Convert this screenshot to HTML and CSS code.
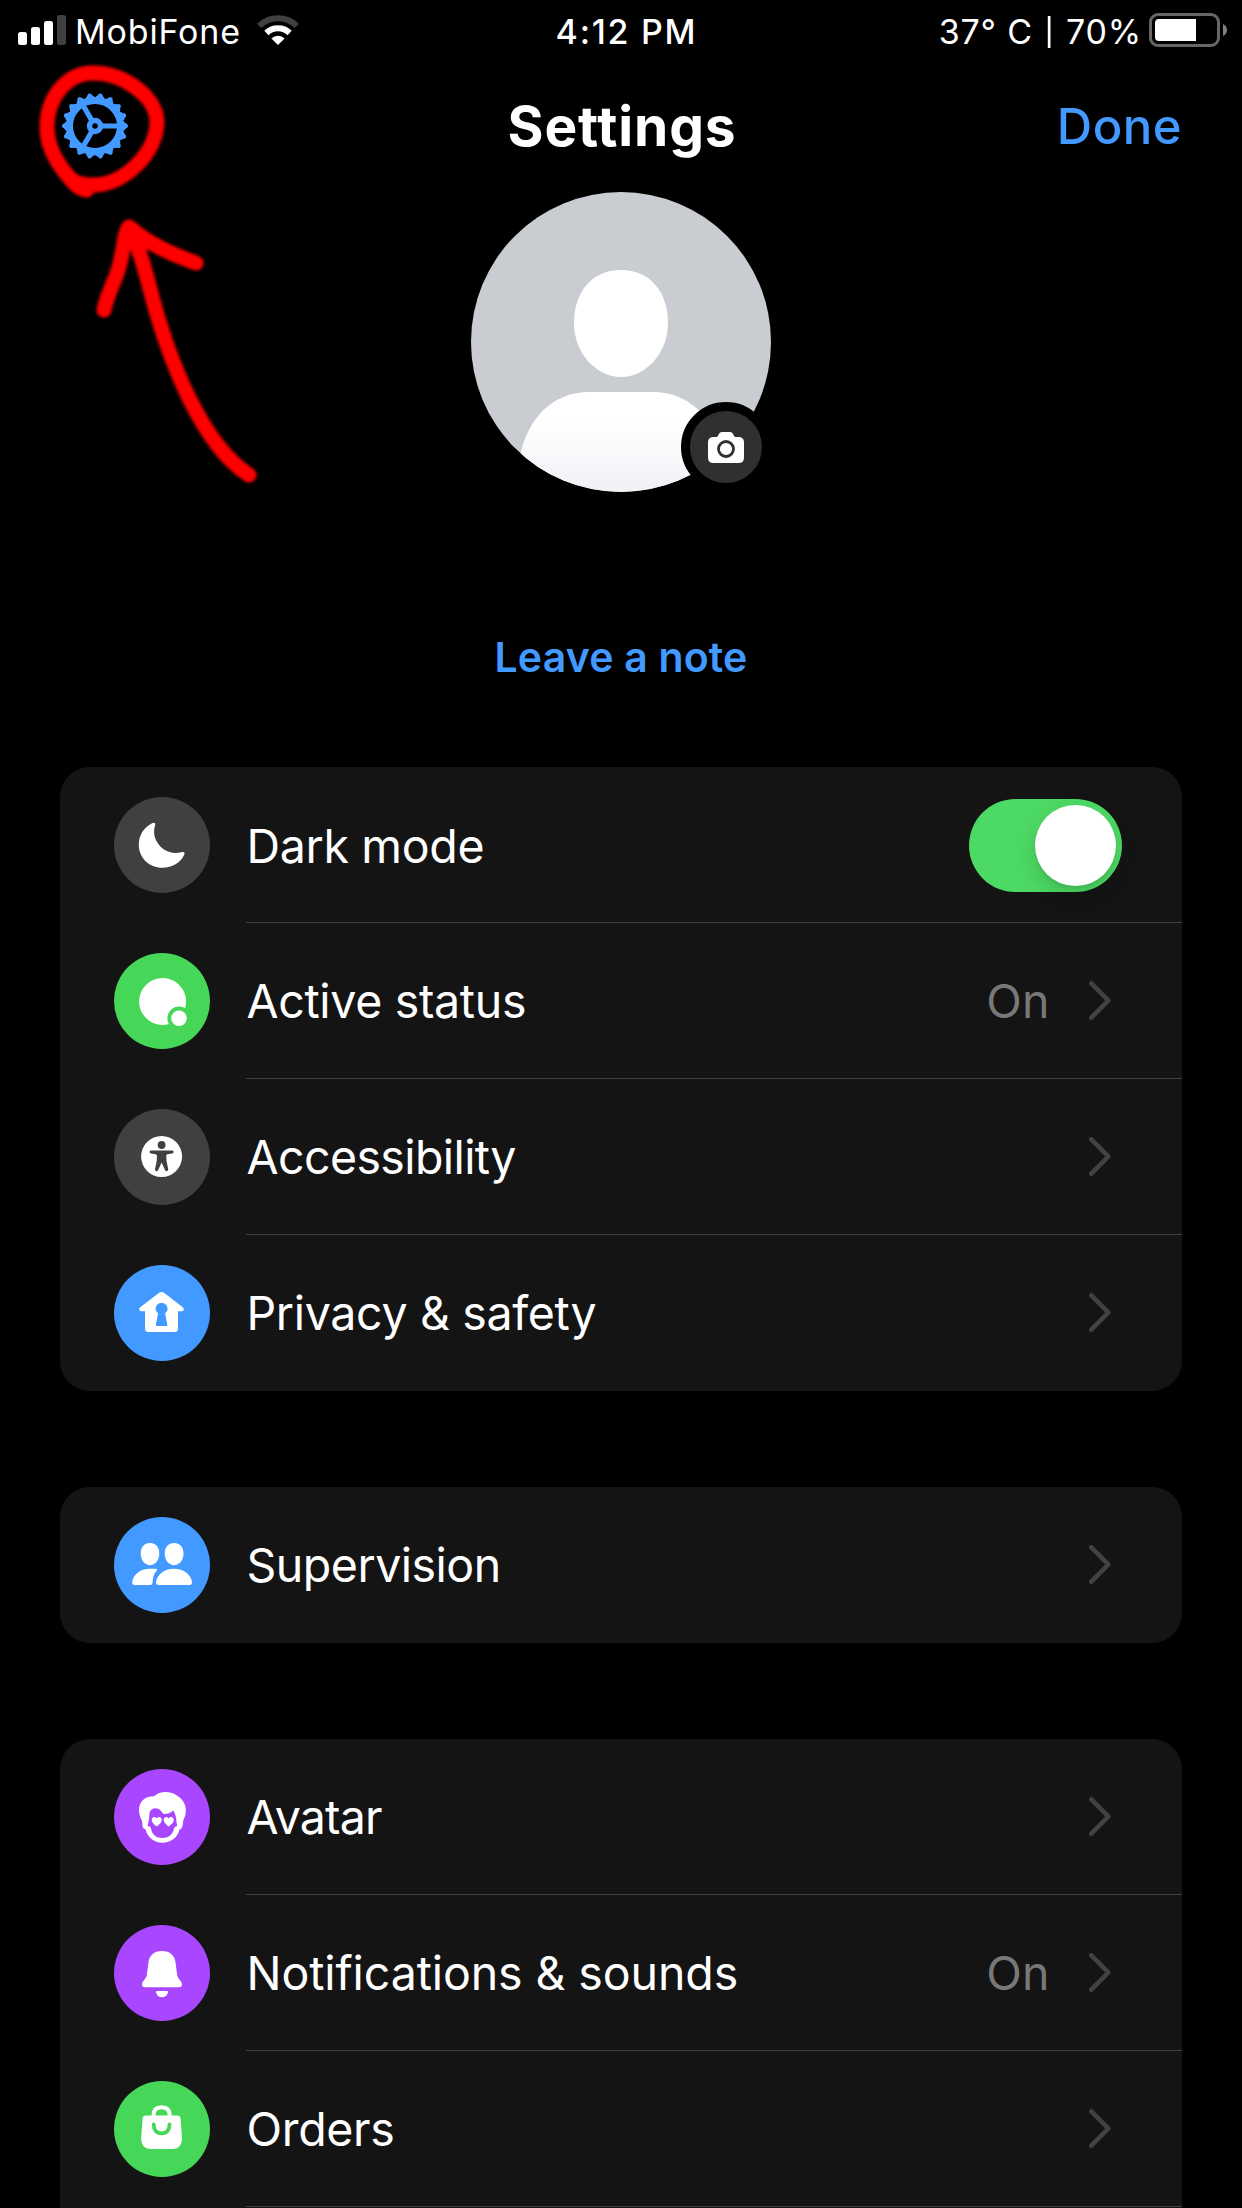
FILE: index.html
```html
<!DOCTYPE html>
<html lang="en">
<head>
<meta charset="utf-8">
<title>Settings</title>
<link rel="stylesheet" href="styles.css">
</head>
<body>
<div class="screen">
  <div class="status-bar">
    <div class="status-left">
      <svg class="signal" width="48" height="30" viewBox="0 0 48 30" fill="#fff">
        <rect x="0" y="17" width="9" height="13" rx="2.5"/>
        <rect x="13" y="12" width="9" height="18" rx="2.5"/>
        <rect x="26" y="6" width="9" height="24" rx="2.5"/>
        <rect x="39" y="0" width="9" height="30" rx="2.5" fill="#404040"/>
      </svg>
      <span class="status-text">MobiFone</span>
      <svg class="wifi" width="42" height="30" viewBox="0 0 42 30" fill="none">
        <path d="M2.2 10.8A27 27 0 0 1 39.8 10.8" stroke="#404040" stroke-width="6"/>
        <path d="M9.4 18A16.8 16.8 0 0 1 32.6 18" stroke="#fff" stroke-width="6"/>
        <path d="M21 30L14.4 23.4A9.4 9.4 0 0 1 27.6 23.4Z" fill="#fff"/>
      </svg>
    </div>
    <span class="status-text time">4:12 PM</span>
    <div class="status-right">
      <span class="status-text">37° C <span class="bar">|</span> 70%</span>
      <svg class="battery" width="78" height="34" viewBox="0 0 78 34">
        <rect x="1.5" y="1.5" width="68" height="31" rx="7.5" fill="none" stroke="#666" stroke-width="3"/>
        <path d="M10 6H47V28H10Q6 28 6 24V10Q6 6 10 6Z" fill="#fff"/>
        <path d="M74 11Q78 13 78 17T74 23Z" fill="#808080"/>
      </svg>
    </div>
  </div>

  <header class="nav">
    <svg class="gear" width="66" height="66" viewBox="-33 -33 66 66" fill="#4299ff">
      <defs>
        <path id="tooth" d="M26-6C29-5 29.5-4 30.6-2.7C31.5-2 33-2 33 0S31.5 2 30.6 2.7C29.5 4 29 5 26 6Z"/>
      </defs>
      <use href="#tooth"/>
      <use href="#tooth" transform="rotate(20)"/>
      <use href="#tooth" transform="rotate(40)"/>
      <use href="#tooth" transform="rotate(60)"/>
      <use href="#tooth" transform="rotate(80)"/>
      <use href="#tooth" transform="rotate(100)"/>
      <use href="#tooth" transform="rotate(120)"/>
      <use href="#tooth" transform="rotate(140)"/>
      <use href="#tooth" transform="rotate(160)"/>
      <use href="#tooth" transform="rotate(180)"/>
      <use href="#tooth" transform="rotate(200)"/>
      <use href="#tooth" transform="rotate(220)"/>
      <use href="#tooth" transform="rotate(240)"/>
      <use href="#tooth" transform="rotate(260)"/>
      <use href="#tooth" transform="rotate(280)"/>
      <use href="#tooth" transform="rotate(300)"/>
      <use href="#tooth" transform="rotate(320)"/>
      <use href="#tooth" transform="rotate(340)"/>
      <g fill="none" stroke="#4299ff">
        <circle r="25.2" stroke-width="6.4"/>
        <circle r="5.5" stroke-width="5.4"/>
        <path d="M7 0H24M-3.5 6.1L-12 20.8M-3.5-6.1L-12-20.8" stroke-width="5.2"/>
      </g>
    </svg>
    <h1 class="title">Settings</h1>
    <a class="done">Done</a>
  </header>

  <section class="profile">
    <div class="avatar">
      <svg width="300" height="300" viewBox="0 0 300 300">
        <defs>
          <linearGradient id="body" x1="0" y1="0" x2="0" y2="1">
            <stop offset=".3" stop-color="#fff"/>
            <stop offset="1" stop-color="#eff1f5"/>
          </linearGradient>
          <clipPath id="disc"><circle cx="150" cy="150" r="150"/></clipPath>
        </defs>
        <g clip-path="url(#disc)">
          <rect width="300" height="300" fill="#c9ccd1"/>
          <path d="M150 78C179 78 197 100 197 131C197 162 174 185 150 185S103 162 103 131C103 100 121 78 150 78Z" fill="#fff"/>
          <path d="M46 300C44 236 76 200 118 200H182C224 200 256 236 254 300Z" fill="url(#body)"/>
        </g>
      </svg>
      <span class="camera-badge">
        <svg width="36" height="31" viewBox="0 0 36 31">
          <path d="M5.500 5H8.500C10.500 5 10.500 0 14 0H22C25.500 0 25.500 5 27.500 5H30.500Q36 5 36 10.500V25.500Q36 31 30.500 31H5.500Q0 31 0 25.500V10.500Q0 5 5.500 5Z" fill="#fff"/>
          <circle cx="18" cy="17" r="7.500" fill="none" stroke="#303030" stroke-width="2.800"/>
        </svg>
      </span>
    </div>
    <a class="note">Leave a note</a>
  </section>

  <section class="card">
    <div class="row">
      <svg class="icon icon-gray" viewBox="0 0 96 96" fill="#fff">
        <path d="M37.200 26.800C39.500 25.200 41.500 25 41.200 28C39.600 33 39.500 38.500 42.500 44C47 52.500 56 57.500 66.500 55.400C69.500 54.700 71.300 54.800 70.200 57.800C66.500 66 58 70.800 48.500 70.800C35 70.800 24.800 60.800 24.800 47.800C24.800 38.500 29.500 31 37.200 26.800Z"/>
      </svg>
      <div class="row-body row-toggle">
        <span class="label">Dark mode</span>
        <span class="toggle"><span class="knob"></span></span>
      </div>
    </div>
    <div class="row">
      <svg class="icon icon-green" viewBox="0 0 96 96" fill="#fff">
        <circle cx="48.600" cy="48.500" r="23.500"/>
        <circle cx="65" cy="65.200" r="11.600" fill="#46d758"/>
        <circle cx="65" cy="65.200" r="7.800"/>
      </svg>
      <div class="row-body">
        <span class="label">Active status</span>
        <span class="value">On</span>
        <svg class="chevron" viewBox="0 0 22 39"><path d="M2.300 2.300L19.300 19.500L2.300 36.700"/></svg>
      </div>
    </div>
    <div class="row">
      <svg class="icon icon-gray" viewBox="0 0 96 96">
        <circle cx="47.600" cy="47.500" r="20.500" fill="#fff"/>
        <circle cx="47.600" cy="36" r="3.900" fill="#404040"/>
        <path d="M37 41.600H58.200Q59.600 41.600 59.600 43Q59.600 44.200 58.200 44.500L53.500 45.200Q52.200 45.500 52.300 46.700L52.500 52L54.200 60Q54.400 61.800 53 62.100Q51.600 62.300 51 60.900L47.600 53.500L44.200 60.900Q43.600 62.300 42.200 62.100Q40.800 61.800 41 60L42.700 52L42.900 46.700Q43 45.500 41.700 45.200L37 44.500Q35.600 44.200 35.600 43Q35.600 41.600 37 41.600Z" fill="#404040"/>
      </svg>
      <div class="row-body">
        <span class="label tight">Accessibility</span>
        <svg class="chevron" viewBox="0 0 22 39"><path d="M2.300 2.300L19.300 19.500L2.300 36.700"/></svg>
      </div>
    </div>
    <div class="row">
      <svg class="icon icon-blue" viewBox="0 0 96 96">
        <path d="M44.500 28.300Q47.600 25.700 50.700 28.300L68.800 42.300Q70.400 43.800 69.600 45.200Q69 46.300 67.500 46.300H64V63.500Q64 67 60.500 67H34.500Q31 67 31 63.500V46.300H27.500Q26 46.300 25.400 45.200Q24.600 43.800 26.200 42.300Z" fill="#fff"/>
        <path d="M47.600 38A5.600 5.600 0 0 1 51.100 48.200L53.300 59.500Q53.500 61 52.200 61H43Q41.700 61 41.900 59.500L44.100 48.200A5.600 5.600 0 0 1 47.600 38Z" fill="#4299ff"/>
      </svg>
      <div class="row-body">
        <span class="label">Privacy &amp; safety</span>
        <svg class="chevron" viewBox="0 0 22 39"><path d="M2.300 2.300L19.300 19.500L2.300 36.700"/></svg>
      </div>
    </div>
  </section>

  <section class="card">
    <div class="row">
      <svg class="icon icon-blue" viewBox="0 0 96 96" fill="#fff">
        <path d="M36 26C42 26 45.300 30.500 45.300 36.500C45.300 43.500 41 48.200 36 48.200S26.700 43.500 26.700 36.500C26.700 30.500 30 26 36 26Z"/>
        <path d="M60.100 26C66.100 26 69.500 30.500 69.500 36.500C69.500 43.500 65.200 48.200 60.100 48.200S50.700 43.500 50.700 36.500C50.700 30.500 54.100 26 60.100 26Z"/>
        <path d="M36 51.800H42Q43.800 52.200 42.500 54Q38.600 58 38.600 65.500Q38.600 68 36.500 68H20.500Q18 68 18.200 65C19 58 26 51.800 36 51.800Z"/>
        <path d="M60 51.800C70 51.800 77.200 58 78 65Q78.200 68 75.500 68H44.500Q41.800 68 42 65C42.800 58 50 51.800 60 51.800Z"/>
      </svg>
      <div class="row-body">
        <span class="label snug">Supervision</span>
        <svg class="chevron" viewBox="0 0 22 39"><path d="M2.300 2.300L19.300 19.500L2.300 36.700"/></svg>
      </div>
    </div>
  </section>

  <section class="card card-cut">
    <div class="row">
      <svg class="icon icon-purple" viewBox="0 0 96 96" fill="#fff">
        <path fill-rule="evenodd" d="M40 27.300C45 22.500 55 21.500 62 26C70 30 73 38 71.500 45C71 49 69 50 69 54C68.500 58.500 67.500 60 65.500 60.500C64 68 57 73.700 48.300 73.700C40 73.700 33.500 68 31.500 60.500C29 59.500 28.300 58 28.300 54C28.300 50 25 48 25 41C25 33 30 27.500 40 27.300ZM35.500 44Q35.500 49 34.300 54L33.500 57Q36.800 57.300 37 59.500C38 66 42.500 69 48.300 69S58.800 66 60 59.500Q60.300 57.300 63.300 57L62.500 53.500C62.400 49 61.500 45 59.300 41.500Q55.500 45 50 45Q48.500 44.500 47 42C44 37.800 36.500 38.500 35.500 44Z"/>
        <path d="M42.700 57.500C40 55.500 37.700 53.500 37.700 50.800C37.700 47.500 41.500 47 42.900 49.500C44.200 47 47.700 48 47.700 51C47.700 53.500 45.300 55.700 42.700 57.500Z"/>
        <path d="M54.700 57.500C52 55.500 49.700 53.500 49.700 50.800C49.700 47.500 53.500 47 54.800 49.500C56.200 47 59.800 48 59.800 51C59.800 53.500 57.300 55.700 54.700 57.500Z"/>
      </svg>
      <div class="row-body">
        <span class="label tighter">Avatar</span>
        <svg class="chevron" viewBox="0 0 22 39"><path d="M2.300 2.300L19.300 19.500L2.300 36.700"/></svg>
      </div>
    </div>
    <div class="row">
      <svg class="icon icon-purple" viewBox="0 0 96 96" fill="#fff">
        <path d="M48 26C56 26 61 30.500 61.600 38L63.200 50C63.800 54 68 56 68 59.500Q68 62.300 65 62.300H31Q28 62.300 28 59.500C28 56 32.200 54 32.800 50L34.400 38C35 30.500 40 26 48 26Z"/>
        <path d="M43 66H53Q54.600 66 54 67.500Q52.500 72.200 48 72.200T42 67.500Q41.400 66 43 66Z"/>
      </svg>
      <div class="row-body">
        <span class="label loose">Notifications &amp; sounds</span>
        <span class="value">On</span>
        <svg class="chevron" viewBox="0 0 22 39"><path d="M2.300 2.300L19.300 19.500L2.300 36.700"/></svg>
      </div>
    </div>
    <div class="row">
      <svg class="icon icon-green" viewBox="0 0 96 96">
        <path d="M39.500 36V34.500Q39.500 26.300 47.600 26.300T55.700 34.500V36" fill="none" stroke="#fff" stroke-width="4"/>
        <path d="M31.500 34.500H63.700Q66.300 34.500 66.500 37L68 56Q68.500 68 58 68H37.200Q26.700 68 27.200 56L28.700 37Q28.900 34.500 31.500 34.500Z" fill="#fff"/>
        <path d="M39.700 43.500C39.700 49 42.500 52.300 47.600 52.300S55.500 49 55.500 43.500" fill="none" stroke="#46d758" stroke-width="3.800" stroke-linecap="round"/>
      </svg>
      <div class="row-body">
        <span class="label">Orders</span>
        <svg class="chevron" viewBox="0 0 22 39"><path d="M2.300 2.300L19.300 19.500L2.300 36.700"/></svg>
      </div>
    </div>
  </section>

  <svg class="markup" width="300" height="500" viewBox="0 0 300 500">
    <path d="M87 190C80 190 73 183 68 176C56 162 47 146 47 127C47 96 68 73 93 73C125 73 157 98 157 122C157 152 125 185 93 185C84 185 76 183 71 179"/>
    <path d="M249 475C202 445 168 360 149 285C143 262 136 240 129 227C124 233 124 250 119 267C116 279 107 294 104 310M129 227C145 241 170 254 196 263"/>
  </svg>
</div>
</body>
</html>
```
FILE: styles.css
```css
* {
  box-sizing: border-box;
}

body {
  margin: 0;
  background: #000;
  color: #fff;
  font-family: Inter, "Liberation Sans", sans-serif;
}

svg {
  display: block;
  flex: none;
}

.screen {
  position: relative;
  width: 1242px;
  height: 2208px;
  overflow: hidden;
}

/* Status bar */
.status-bar {
  display: grid;
  grid-template-columns: 1fr auto 1fr;
  align-items: center;
  height: 60px;
  padding: 0 15px 0 18px;
}

.status-left,
.status-right {
  display: flex;
  align-items: center;
}

.status-right {
  justify-content: flex-end;
  gap: 7px;
}

.status-text {
  padding-top: 3px;
  font-size: 34px;
  line-height: 40px;
  letter-spacing: 0.84px;
  white-space: nowrap;
}

.bar {
  display: inline-block;
  transform: scaleY(0.8);
}

.signal {
  margin-right: 9px;
}

.wifi {
  margin-left: 16px;
}

.time {
  padding-left: 8px;
  font-weight: 500;
  letter-spacing: 1.74px;
}

/* Navigation */
.nav {
  display: grid;
  grid-template-columns: 1fr auto 1fr;
  align-items: center;
  height: 132px;
  padding: 0 60px 0 62px;
}

.title {
  margin: 0;
  font-size: 55px;
  font-weight: 700;
  line-height: 66px;
  letter-spacing: 0.9px;
}

.done,
.note {
  color: #4299ff;
}

.done {
  justify-self: end;
  padding-top: 2px;
  font-size: 49px;
  font-weight: 500;
  line-height: 60px;
  letter-spacing: 0.5px;
}

/* Profile */
.profile {
  display: flex;
  flex-direction: column;
  align-items: center;
  gap: 140px;
}

.avatar {
  position: relative;
}

.camera-badge {
  position: absolute;
  right: 0;
  bottom: 0;
  display: flex;
  align-items: center;
  justify-content: center;
  width: 90px;
  height: 90px;
  border: 9px solid #000;
  border-radius: 50%;
  background: #303030;
}

.note {
  font-size: 41px;
  font-weight: 600;
  line-height: 50px;
  letter-spacing: 0.19px;
}

/* Setting groups */
.card {
  margin: 96px 60px 0;
  border-radius: 30px;
  background: #141414;
}

.profile + .card {
  margin-top: 85px;
}

.card-cut {
  height: 520px;
}

.row {
  display: flex;
  height: 156px;
  padding-left: 54px;
  gap: 36px;
  align-items: center;
}

.icon {
  width: 96px;
  height: 96px;
  border-radius: 50%;
}

.icon-gray { background: #404040; }
.icon-green { background: #46d758; }
.icon-blue { background: #4299ff; }
.icon-purple { background: #a946ff; }

.row-body {
  display: flex;
  flex: 1;
  align-items: center;
  height: 156px;
  padding: 0 71px 0 0;
  border-bottom: 1px solid #404040;
}

.row-toggle {
  padding-top: 1px;
  padding-right: 60px;
}

.card:not(.card-cut) .row:last-child .row-body {
  border-bottom-color: transparent;
}

.label {
  flex: 1;
  padding: 1px 0 0 0.5px;
  font-size: 46.5px;
  line-height: 56px;
  letter-spacing: -0.33px;
  white-space: nowrap;
}

.snug { letter-spacing: -0.5px; }
.tight { letter-spacing: -0.6px; }
.tighter { letter-spacing: -0.8px; }
.loose { letter-spacing: -0.1px; }

.value {
  margin-right: 39px;
  padding-top: 1px;
  color: #787878;
  font-size: 46.5px;
  line-height: 56px;
  letter-spacing: 0.4px;
}

.chevron {
  width: 22px;
  height: 39px;
  fill: none;
  stroke: #424242;
  stroke-width: 4.6;
  stroke-linecap: round;
  stroke-linejoin: round;
}

.toggle {
  display: flex;
  align-items: center;
  justify-content: flex-end;
  width: 153px;
  height: 93px;
  padding: 6px;
  border-radius: 47px;
  background: #4dda64;
}

.knob {
  width: 81px;
  height: 81px;
  border-radius: 50%;
  background: #fff;
  box-shadow: 0 9px 24px rgba(0, 0, 0, 0.15), 0 3px 3px rgba(0, 0, 0, 0.06);
}

/* Hand-drawn circle and arrow over the page */
.markup {
  position: absolute;
  top: 0;
  left: 0;
  fill: none;
  stroke: #f00;
  stroke-width: 15;
  stroke-linecap: round;
  stroke-linejoin: round;
  filter: blur(1.5px);
}
```
